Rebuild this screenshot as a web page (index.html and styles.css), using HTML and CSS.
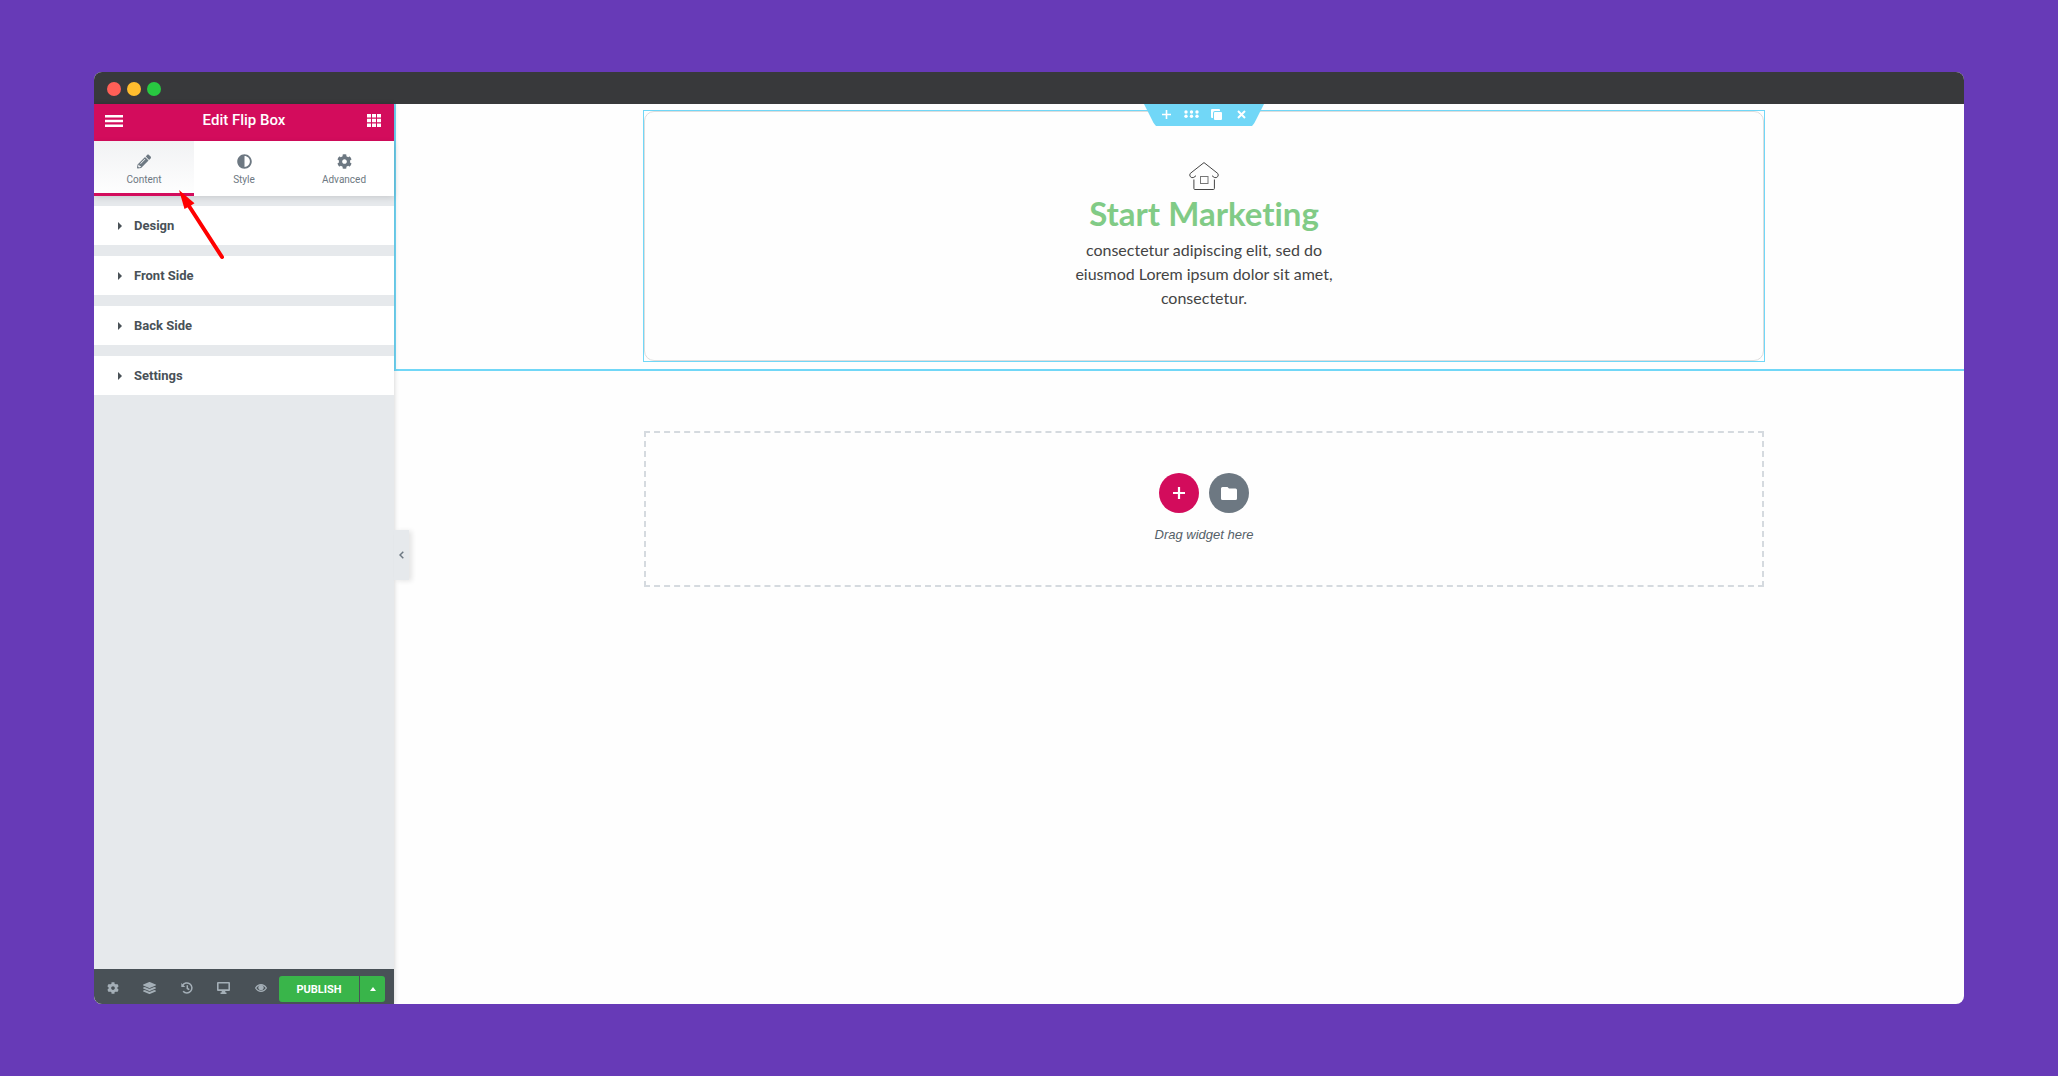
FILE: index.html
```html
<!DOCTYPE html>
<html lang="en">
<head>
    <meta charset="UTF-8">
    <meta name="viewport" content="width=device-width, initial-scale=1.0">
    <title>Edit Flip Box</title>
    <link rel="stylesheet" href="styles.css">
</head>
<body>
    <!-- Shared icons -->
    <svg class="sprite" aria-hidden="true">
        <symbol id="cog" viewBox="0 0 512 512"><path d="M487.4 315.7l-42.6-24.6c4.3-23.2 4.3-47 0-70.2l42.6-24.6c4.9-2.8 7.1-8.6 5.5-14-11.1-35.6-30-67.8-54.7-94.6-3.8-4.1-10-5.1-14.8-2.3L380.8 110c-17.9-15.4-38.5-27.3-60.8-35.1V25.8c0-5.6-3.9-10.5-9.4-11.7-36.7-8.2-74.3-7.8-109.2 0-5.5 1.2-9.4 6.1-9.4 11.7V75c-22.2 7.9-42.8 19.8-60.8 35.1L88.7 85.5c-4.9-2.8-11-1.9-14.8 2.3-24.7 26.7-43.6 58.9-54.7 94.6-1.7 5.4.6 11.2 5.5 14L67.3 221c-4.3 23.2-4.3 47 0 70.2l-42.6 24.6c-4.9 2.8-7.1 8.6-5.5 14 11.1 35.6 30 67.8 54.7 94.6 3.8 4.1 10 5.1 14.8 2.3l42.6-24.6c17.9 15.4 38.5 27.3 60.8 35.1v49.2c0 5.6 3.9 10.5 9.4 11.7 36.7 8.2 74.3 7.8 109.2 0 5.5-1.2 9.4-6.1 9.4-11.7v-49.2c22.2-7.9 42.8-19.8 60.8-35.1l42.6 24.6c4.9 2.8 11 1.9 14.8-2.3 24.7-26.7 43.6-58.9 54.7-94.6 1.5-5.5-.7-11.3-5.6-14.1zM256 336c-44.1 0-80-35.9-80-80s35.9-80 80-80 80 35.9 80 80-35.9 80-80 80z"/></symbol>
    </svg>

    <div class="window">
        <!-- Title Bar -->
        <div class="titlebar">
            <span class="dot red"></span>
            <span class="dot yellow"></span>
            <span class="dot green"></span>
        </div>

        <div class="editor">
            <!-- Side Panel -->
            <aside class="panel">
                <header class="panel-header">
                    <button class="icon-button" aria-label="Menu">
                        <svg width="18" height="12" viewBox="0 0 18 12"><path d="M0 0h18v2.400H0zM0 4.800h18v2.400H0zM0 9.600h18V12H0z"/></svg>
                    </button>
                    <h1>Edit Flip Box</h1>
                    <button class="icon-button" aria-label="Widgets">
                        <svg width="14" height="13" viewBox="0 0 14 13"><path d="M0 0h4v3.500H0zM5 0h4v3.500H5zM10 0h4v3.500h-4zM0 4.700h4v3.500H0zM5 4.700h4v3.500H5zM10 4.700h4v3.500h-4zM0 9.400h4V13H0zM5 9.400h4V13H5zM10 9.400h4V13h-4z"/></svg>
                    </button>
                </header>

                <nav class="tabs">
                    <button class="tab active">
                        <svg width="14" height="14" viewBox="0 0 512 512"><path d="M497.900 142.100l-46.100 46.100c-4.700 4.700-12.300 4.700-17 0l-111-111c-4.700-4.700-4.700-12.300 0-17l46.100-46.100c18.700-18.700 49.100-18.700 67.900 0l60.100 60.100c18.800 18.700 18.800 49.100 0 67.900zM284.200 99.800L21.600 362.400.4 483.900c-2.900 16.400 11.400 30.600 27.800 27.800l121.500-21.300 262.600-262.600c4.700-4.700 4.700-12.300 0-17l-111-111c-4.800-4.700-12.400-4.700-17.100 0zM124.100 339.900c-5.500-5.500-5.500-14.300 0-19.800l154-154c5.500-5.500 14.300-5.500 19.800 0s5.500 14.300 0 19.800l-154 154c-5.500 5.500-14.300 5.500-19.800 0zM88 424h48v36.300l-64.500 11.300-31.100-31.100L51.700 376H88v48z"/></svg>
                        Content
                    </button>
                    <button class="tab">
                        <svg width="15" height="15" viewBox="0 0 512 512"><path d="M8 256c0 136.966 111.033 248 248 248s248-111.034 248-248S392.966 8 256 8 8 119.033 8 256zm248 184V72c101.705 0 184 82.311 184 184 0 101.705-82.311 184-184 184z"/></svg>
                        Style
                    </button>
                    <button class="tab">
                        <svg width="15" height="15"><use href="#cog"/></svg>
                        Advanced
                    </button>
                </nav>

                <div class="sections">
                    <button class="section-title"><span class="caret"></span>Design</button>
                    <button class="section-title"><span class="caret"></span>Front Side</button>
                    <button class="section-title"><span class="caret"></span>Back Side</button>
                    <button class="section-title"><span class="caret"></span>Settings</button>
                </div>

                <footer class="panel-footer">
                    <button class="tool" aria-label="Settings">
                        <svg width="12" height="12"><use href="#cog"/></svg>
                    </button>
                    <button class="tool" aria-label="Navigator">
                        <svg width="13" height="12" viewBox="0 0 512 512" preserveAspectRatio="none"><path d="M12.410 148.020l232.940 105.670c6.800 3.090 14.490 3.090 21.290 0l232.940-105.670c16.550-7.510 16.550-32.520 0-40.030L266.650 2.310a25.607 25.607 0 0 0-21.290 0L12.410 107.980c-16.550 7.510-16.550 32.530 0 40.040zm487.180 88.280l-58.090-26.330-161.640 73.270c-7.560 3.430-15.590 5.170-23.860 5.170s-16.290-1.740-23.860-5.170L70.510 209.970l-58.100 26.330c-16.550 7.500-16.550 32.500 0 40l232.940 105.590c6.800 3.080 14.490 3.080 21.290 0L499.590 276.300c16.550-7.500 16.550-32.500 0-40zm0 127.800l-57.870-26.230-161.860 73.370c-7.560 3.430-15.590 5.170-23.860 5.170s-16.290-1.740-23.860-5.170L70.290 337.870 12.410 364.100c-16.550 7.500-16.550 32.500 0 40l232.940 105.590c6.800 3.080 14.490 3.080 21.290 0L499.590 404.100c16.550-7.500 16.550-32.500 0-40z"/></svg>
                    </button>
                    <button class="tool" aria-label="History">
                        <svg width="12" height="12" viewBox="0 0 12 12"><path class="line" d="M1.500 3.500a5 5 0 1 1 .6 5.700M6.300 3.300v3.200l2 1.200"/><path d="M.3.900v4h4z"/></svg>
                    </button>
                    <button class="tool" aria-label="Responsive Mode">
                        <svg width="13" height="12" viewBox="0 0 13 12"><path fill-rule="evenodd" d="M1 0h11a1 1 0 0 1 1 1v7a1 1 0 0 1-1 1H8.200l.3 1.500h1V12h-6v-1.500h1L4.800 9H1a1 1 0 0 1-1-1V1a1 1 0 0 1 1-1zm.6 1.500v5.700h9.800V1.500z"/></svg>
                    </button>
                    <button class="tool" aria-label="Preview">
                        <svg width="12" height="8" viewBox="0 0 12 8"><path class="line thin" d="M.6 4Q2.600.6 6 .6T11.400 4Q9.400 7.400 6 7.400T.6 4z"/><circle cx="6" cy="3.600" r="2.700"/></svg>
                    </button>
                    <div class="publish">
                        <button class="publish-main">PUBLISH</button>
                        <button class="publish-more" aria-label="Save Options"><span class="caret-up"></span></button>
                    </div>
                </footer>

                <button class="collapse" aria-label="Hide Panel">
                    <svg width="5" height="8" viewBox="0 0 5 8"><path d="M4.300.7L1 4l3.300 3.300"/></svg>
                </button>
            </aside>

            <!-- Page Preview -->
            <main class="preview">
                <div class="page">
                    <section class="page-section">
                        <div class="widget">
                            <div class="widget-tools">
                                <button aria-label="Add"><svg width="9" height="9" viewBox="0 0 9 9"><path d="M3.700 0h1.600v3.700H9v1.600H5.300V9H3.700V5.300H0V3.700h3.700z"/></svg></button>
                                <button aria-label="Edit"><svg width="15" height="8" viewBox="0 0 15 8"><circle cx="2" cy="2" r="1.700"/><circle cx="7.500" cy="2" r="1.700"/><circle cx="13" cy="2" r="1.700"/><circle cx="2" cy="6.300" r="1.700"/><circle cx="7.500" cy="6.300" r="1.700"/><circle cx="13" cy="6.300" r="1.700"/></svg></button>
                                <button aria-label="Duplicate"><svg width="11" height="11" viewBox="0 0 11 11"><path d="M1 0h7q1 0 1 1v1H4Q2 2 2 4v5H1Q0 9 0 8V1q0-1 1-1z"/><rect x="3" y="3" width="8" height="8" rx="1"/></svg></button>
                                <button aria-label="Delete"><svg width="9" height="9" viewBox="0 0 9 9"><path class="cross" d="M1 1l7 7M8 1L1 8"/></svg></button>
                            </div>
                            <div class="flip-box">
                                <svg class="house" width="30" height="28" viewBox="0 0 30 28"><path d="M15 .6L1.300 11.400Q.2 13 1.200 14.500q1.500 1.900 3.600.9l2.200-1.700M15 .6l13.700 10.800q1.100 1.600.1 3.100-1.500 1.900-3.600.9L23 13.700M4.900 17.500v9q0 1 1 1h18.500q1 0 1-1v-9"/><rect class="door" x="11.500" y="14.500" width="7.500" height="7"/></svg>
                                <h2>Start Marketing</h2>
                                <p>consectetur adipiscing elit, sed do eiusmod Lorem ipsum dolor sit amet, consectetur.</p>
                            </div>
                        </div>
                    </section>

                    <section class="drop-zone">
                        <div class="drop-buttons">
                            <button class="round add" aria-label="Add New Section"><svg width="12" height="12" viewBox="0 0 12 12"><path d="M4.900 0h2.200v4.900H12v2.200H7.100V12H4.900V7.100H0V4.900h4.900z"/></svg></button>
                            <button class="round folder" aria-label="Add Template"><svg width="16" height="13" viewBox="0 0 16 13"><path d="M1.500 0h5L8 1.500h6.500Q16 1.500 16 3v8.500q0 1.500-1.500 1.500h-13Q0 13 0 11.500v-10Q0 0 1.500 0z"/></svg></button>
                        </div>
                        <p>Drag widget here</p>
                    </section>
                </div>
            </main>
        </div>

        <!-- Pointer to the Content tab -->
        <svg class="pointer" width="46" height="70" viewBox="0 0 46 70"><path class="shaft" d="M10 16l33 51"/><path d="M0 0l15.500 13.300-4.800 3-5.200 2.700z"/></svg>
    </div>
</body>
</html>
```

FILE: styles.css
```css
* {
    box-sizing: border-box;
}

body {
    margin: 0;
    min-height: 100vh;
    padding: 72px 94px;
    display: flex;
    background: #673ab7;
    font-family: Roboto, "Liberation Sans", sans-serif;
}

button {
    margin: 0;
    padding: 0;
    border: none;
    background: none;
    color: inherit;
    font: inherit;
    cursor: pointer;
}

svg {
    display: block;
    fill: currentColor;
}

.sprite {
    position: absolute;
    width: 0;
    height: 0;
}

.window {
    position: relative;
    flex: 1;
    min-width: 0;
    display: flex;
    flex-direction: column;
    border-radius: 8px;
    overflow: hidden;
    background: #fefefe;
}

.titlebar {
    display: flex;
    align-items: center;
    gap: 6px;
    height: 32px;
    padding: 2px 13px 0;
    background: #38393b;
}

.dot {
    width: 14px;
    height: 14px;
    border-radius: 50%;
}

.red {
    background: #ff5f57;
}

.yellow {
    background: #ffbd2e;
}

.green {
    background: #28c941;
}

.editor {
    flex: 1;
    display: flex;
}

/* Side panel */
.panel {
    position: relative;
    z-index: 1;
    flex: 0 0 300px;
    display: flex;
    flex-direction: column;
    background: #e6e9ec;
    box-shadow: 0 0 5px rgba(0, 0, 0, 0.2);
}

.panel-header {
    display: flex;
    align-items: center;
    justify-content: space-between;
    height: 37px;
    padding: 0 13px 4px 11px;
    background: #d30c5c;
    color: white;
}

.panel-header h1 {
    margin: 0;
    font-size: 15px;
    font-weight: 500;
    line-height: 16px;
    padding: 0 2px 2px 0;
}

.tabs {
    display: flex;
    height: 55px;
    background: white;
    box-shadow: 0 2px 6px rgba(0, 0, 0, 0.12);
}

.tab {
    flex: 1;
    display: flex;
    flex-direction: column;
    align-items: center;
    padding-top: 13px;
    gap: 5px;
    border-bottom: 3px solid transparent;
    color: #6d7882;
    font-size: 10px;
    line-height: 12px;
}

.tab svg {
    height: 15px;
}

.tab.active {
    border-bottom-color: #d30c5c;
    background: linear-gradient(#f1f2f4, #fefefe);
}

.sections {
    flex: 1;
    display: flex;
    flex-direction: column;
    gap: 11px;
    padding-top: 10px;
}

.section-title {
    display: flex;
    align-items: center;
    gap: 12px;
    height: 39px;
    padding-left: 24px;
    background: white;
    color: #495157;
    font-size: 13px;
    font-weight: 700;
}

.caret {
    border: 4px solid transparent;
    border-left-color: #495157;
    border-right: none;
}

.panel-footer {
    display: flex;
    align-items: center;
    height: 35px;
    padding: 0 9px 0 0;
    background: #495157;
    color: #a4afb7;
}

.tool {
    display: flex;
    justify-content: center;
    width: 37px;
    padding-top: 3px;
}

.tool .line {
    fill: none;
    stroke: currentColor;
    stroke-width: 1.5;
}

.tool .thin {
    stroke-width: 1.2;
}

.publish {
    flex: 1;
    display: flex;
    gap: 1px;
    height: 26px;
    margin-top: 5px;
    border-radius: 3px;
    overflow: hidden;
    color: white;
}

.publish-main {
    flex: 1;
    background: #39b54a;
    font-size: 11px;
    font-weight: 700;
}

.publish-more {
    display: flex;
    align-items: center;
    justify-content: center;
    width: 25px;
    background: #39b54a;
}

.caret-up {
    border: 3px solid transparent;
    border-bottom: 4px solid white;
    border-top: none;
}

.collapse {
    position: absolute;
    top: calc(50% - 24px);
    left: 100%;
    width: 15px;
    height: 50px;
    padding-left: 5px;
    background: #e6e9ec;
    box-shadow: 3px 1px 5px rgba(0, 0, 0, 0.1);
    color: #6d7882;
}

.collapse path {
    fill: none;
    stroke: currentColor;
    stroke-width: 1.5;
}

/* Page preview, a little wider than the space left by the panel */
.preview {
    flex: 1;
    min-width: 0;
    overflow: hidden;
}

.page {
    width: calc(100% + 50px);
}

.page-section {
    padding: 6px 20px 7px;
    border: 2px solid #71d7f7;
    border-top: none;
}

.widget {
    position: relative;
    max-width: 1122px;
    margin: 0 auto;
    border: 1px solid #71d7f7;
}

.widget-tools {
    position: absolute;
    top: -7px;
    left: 50%;
    display: flex;
    align-items: center;
    justify-content: center;
    width: 120px;
    height: 22px;
    padding-bottom: 2px;
    background: #71d7f7;
    clip-path: polygon(0 0, 100% 0, 92% 86%, 90% 100%, 10% 100%, 8% 86%);
    transform: translateX(-50%);
    color: white;
}

.widget-tools button {
    display: flex;
    justify-content: center;
    width: 25px;
}

.cross {
    stroke: white;
    stroke-width: 2;
}

.flip-box {
    display: flex;
    flex-direction: column;
    align-items: center;
    min-height: 250px;
    padding-top: 50px;
    border: 1px solid #ddd;
    border-radius: 10px;
    text-align: center;
}

.house {
    fill: none;
    stroke: #444;
    stroke-width: 1;
}

.door {
    stroke: #777;
}

.flip-box h2 {
    margin: 3px 0 5px;
    color: #81cb86;
    font-family: Lato, sans-serif;
    font-size: 33px;
    font-variant-ligatures: none;
    font-weight: 700;
    line-height: 40px;
}

.flip-box p {
    max-width: 280px;
    margin: 0;
    color: #444;
    font-family: Lato, sans-serif;
    font-size: 16px;
    line-height: 24px;
}

.drop-zone {
    display: flex;
    flex-direction: column;
    align-items: center;
    max-width: 1120px;
    min-height: 156px;
    margin: 60px auto 0;
    padding-top: 40px;
    border: 2px dashed #d5dadf;
    color: #556068;
}

.drop-buttons {
    display: flex;
    gap: 10px;
}

.round {
    display: flex;
    align-items: center;
    justify-content: center;
    width: 40px;
    height: 40px;
    border-radius: 50%;
    color: white;
}

.add {
    background: #d30c5c;
}

.folder {
    background: #6d7882;
}

.drop-zone p {
    margin: 13px 0 0;
    font-family: "Liberation Sans", sans-serif;
    font-size: 13px;
    font-style: italic;
    line-height: 18px;
}

.pointer {
    position: absolute;
    top: 118px;
    left: 85px;
    z-index: 2;
    fill: #f00;
}

.shaft {
    stroke: #f00;
    stroke-width: 4;
    stroke-linecap: round;
}
```
